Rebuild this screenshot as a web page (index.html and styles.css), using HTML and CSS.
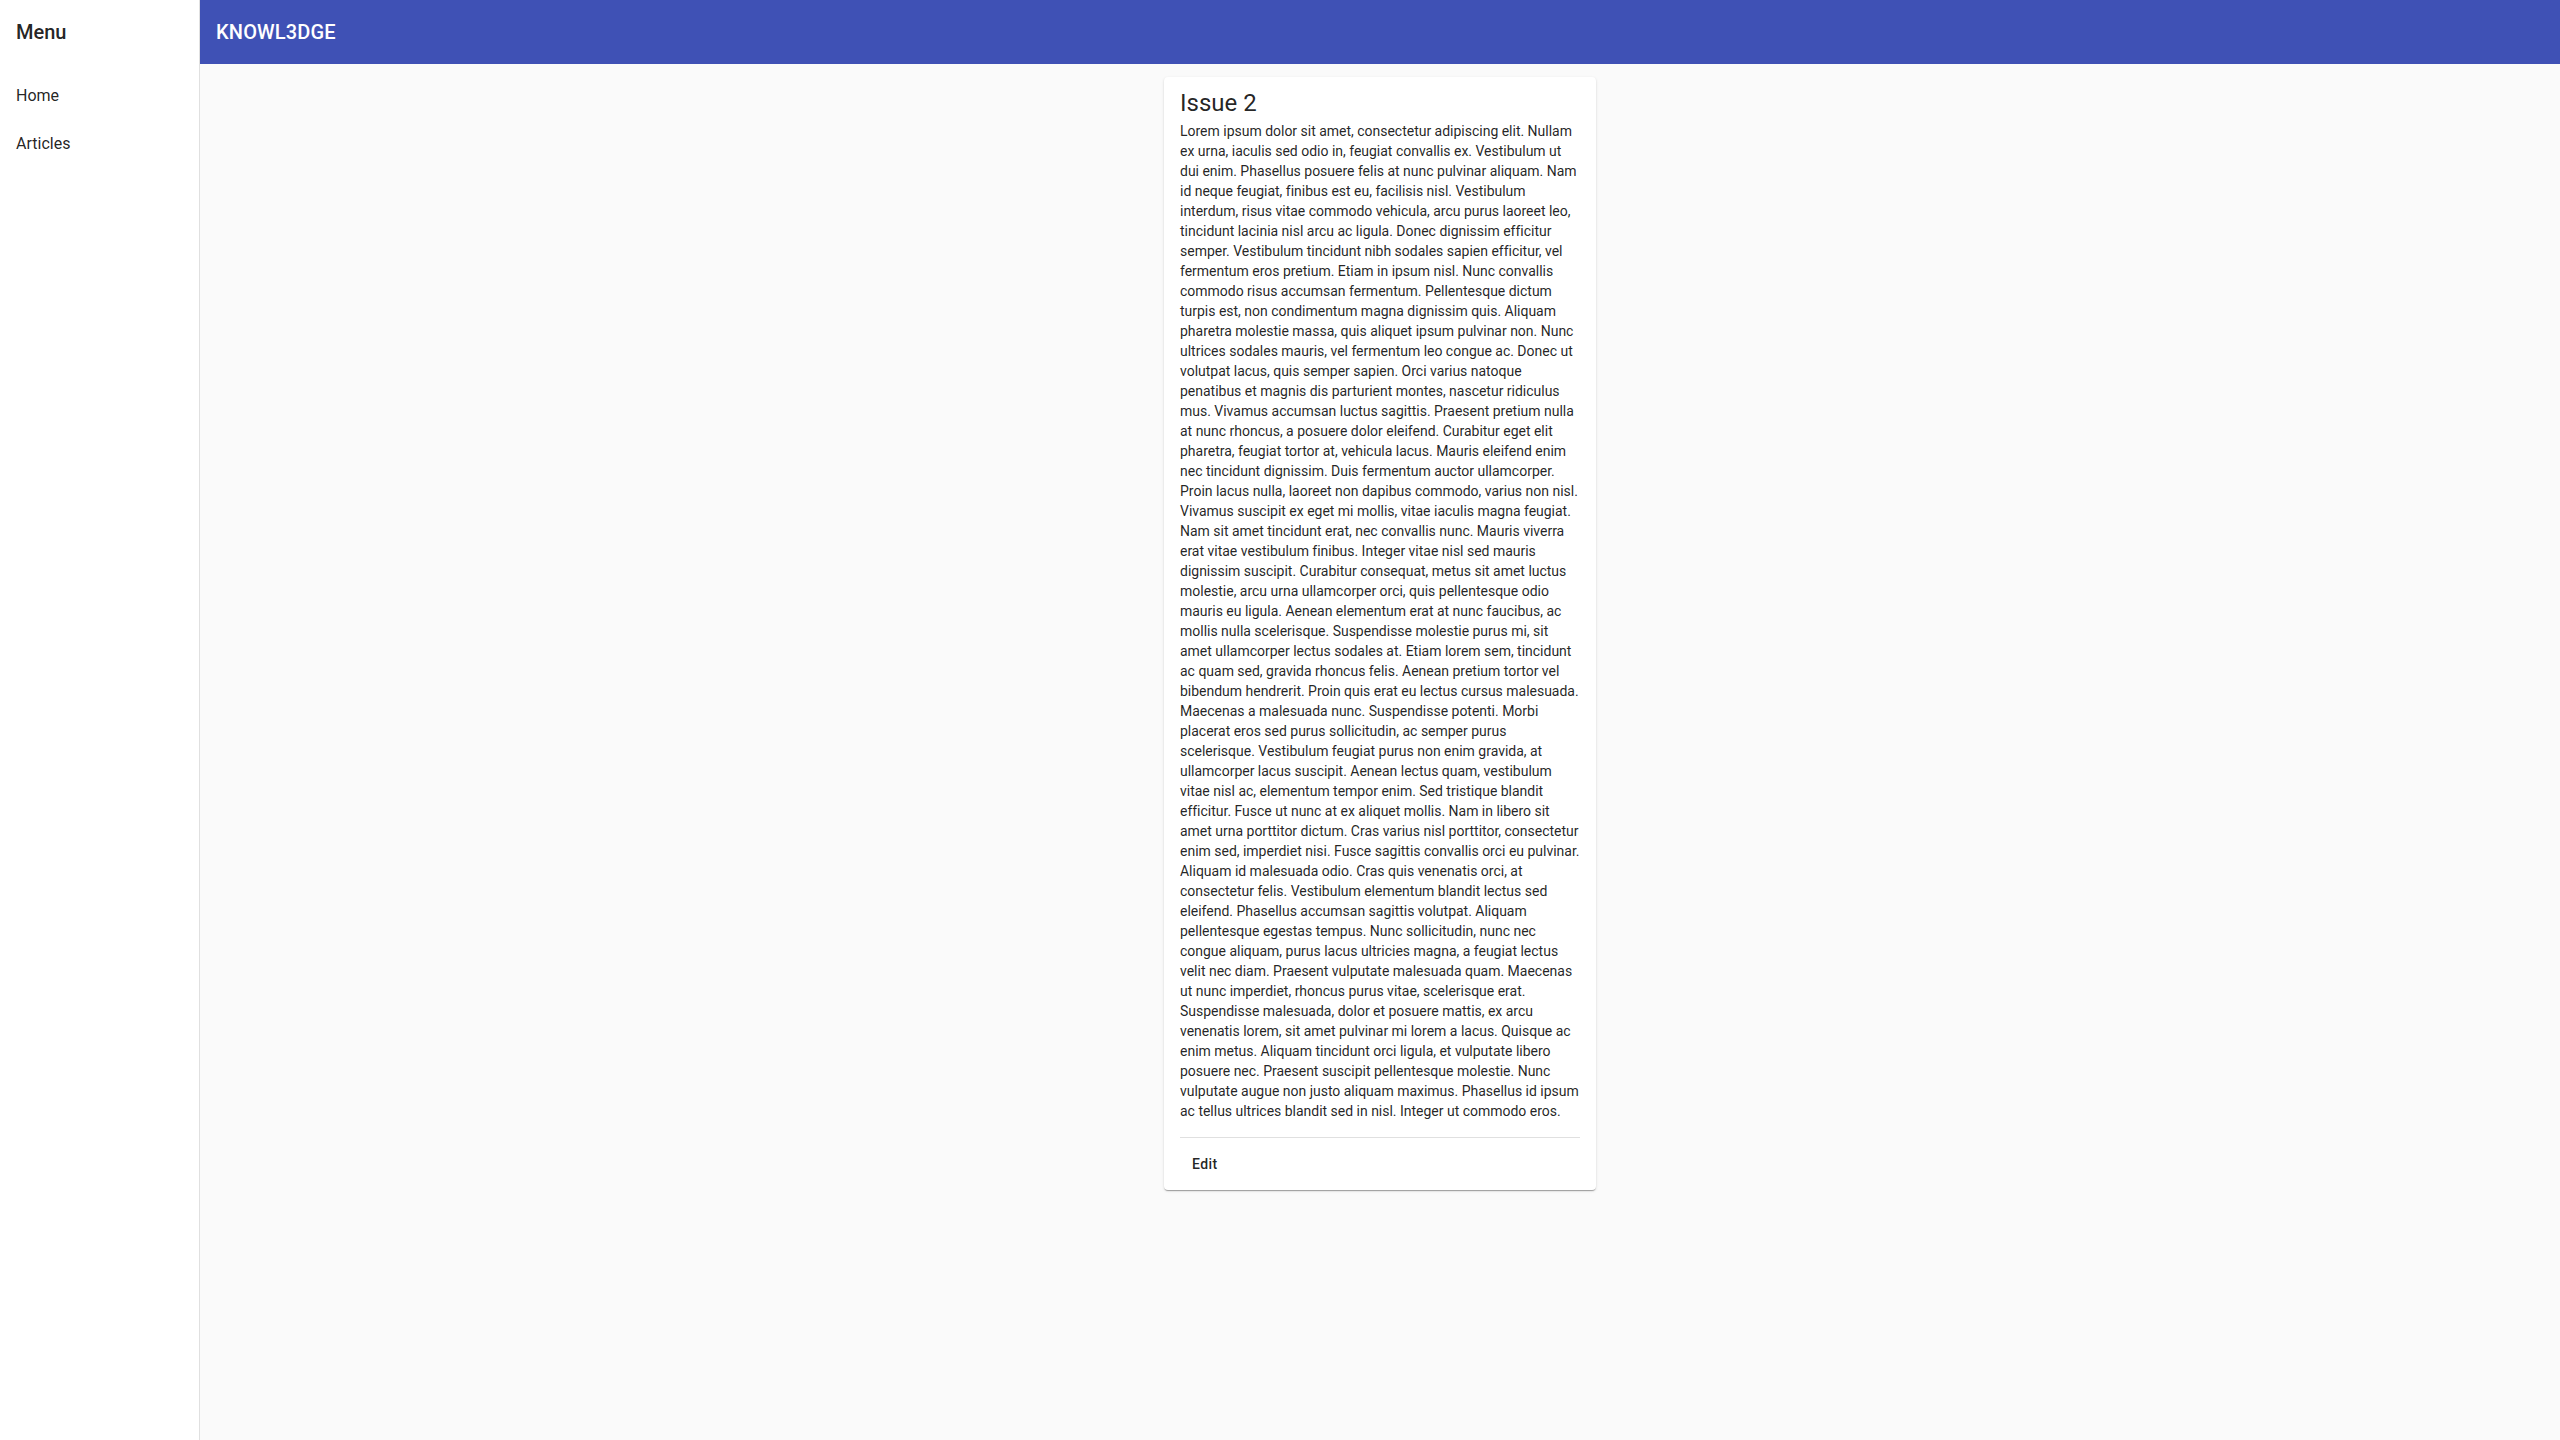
FILE: index.html
```html
<!DOCTYPE html>
<html lang="en">
<head>
<meta charset="utf-8">
<title>KNOWL3DGE</title>
<link rel="stylesheet" href="styles.css">
</head>
<body>
<div class="app">
  <aside class="drawer">
    <div class="drawer-head">Menu</div>
    <ul class="nav">
      <li class="nav-item">Home</li>
      <li class="nav-item">Articles</li>
    </ul>
  </aside>
  <div class="main">
    <header class="appbar">
      <div class="brand">KNOWL3DGE</div>
    </header>
    <main class="content">
      <article class="card">
        <div class="card-body">
          <h2 class="card-title">Issue 2</h2>
          <p class="card-text">Lorem ipsum dolor sit amet, consectetur adipiscing elit. Nullam ex urna, iaculis sed odio in, feugiat convallis ex. Vestibulum ut dui enim. Phasellus posuere felis at nunc pulvinar aliquam. Nam id neque feugiat, finibus est eu, facilisis nisl. Vestibulum interdum, risus vitae commodo vehicula, arcu purus laoreet leo, tincidunt lacinia nisl arcu ac ligula. Donec dignissim efficitur semper. Vestibulum tincidunt nibh sodales sapien efficitur, vel fermentum eros pretium. Etiam in ipsum nisl. Nunc convallis commodo risus accumsan fermentum. Pellentesque dictum turpis est, non condimentum magna dignissim quis. Aliquam pharetra molestie massa, quis aliquet ipsum pulvinar non. Nunc ultrices sodales mauris, vel fermentum leo congue ac. Donec ut volutpat lacus, quis semper sapien. Orci varius natoque penatibus et magnis dis parturient montes, nascetur ridiculus mus. Vivamus accumsan luctus sagittis. Praesent pretium nulla at nunc rhoncus, a posuere dolor eleifend. Curabitur eget elit pharetra, feugiat tortor at, vehicula lacus. Mauris eleifend enim nec tincidunt dignissim. Duis fermentum auctor ullamcorper. Proin lacus nulla, laoreet non dapibus commodo, varius non nisl. Vivamus suscipit ex eget mi mollis, vitae iaculis magna feugiat. Nam sit amet tincidunt erat, nec convallis nunc. Mauris viverra erat vitae vestibulum finibus. Integer vitae nisl sed mauris dignissim suscipit. Curabitur consequat, metus sit amet luctus molestie, arcu urna ullamcorper orci, quis pellentesque odio mauris eu ligula. Aenean elementum erat at nunc faucibus, ac mollis nulla scelerisque. Suspendisse molestie purus mi, sit amet ullamcorper lectus sodales at. Etiam lorem sem, tincidunt ac quam sed, gravida rhoncus felis. Aenean pretium tortor vel bibendum hendrerit. Proin quis erat eu lectus cursus malesuada. Maecenas a malesuada nunc. Suspendisse potenti. Morbi placerat eros sed purus sollicitudin, ac semper purus scelerisque. Vestibulum feugiat purus non enim gravida, at ullamcorper lacus suscipit. Aenean lectus quam, vestibulum vitae nisl ac, elementum tempor enim. Sed tristique blandit efficitur. Fusce ut nunc at ex aliquet mollis. Nam in libero sit amet urna porttitor dictum. Cras varius nisl porttitor, consectetur enim sed, imperdiet nisi. Fusce sagittis convallis orci eu pulvinar. Aliquam id malesuada odio. Cras quis venenatis orci, at consectetur felis. Vestibulum elementum blandit lectus sed eleifend. Phasellus accumsan sagittis volutpat. Aliquam pellentesque egestas tempus. Nunc sollicitudin, nunc nec congue aliquam, purus lacus ultricies magna, a feugiat lectus velit nec diam. Praesent vulputate malesuada quam. Maecenas ut nunc imperdiet, rhoncus purus vitae, scelerisque erat. Suspendisse malesuada, dolor et posuere mattis, ex arcu venenatis lorem, sit amet pulvinar mi lorem a lacus. Quisque ac enim metus. Aliquam tincidunt orci ligula, et vulputate libero posuere nec. Praesent suscipit pellentesque molestie. Nunc vulputate augue non justo aliquam maximus. Phasellus id ipsum ac tellus ultrices blandit sed in nisl. Integer ut commodo eros.</p>
          <hr class="divider">
          <div class="card-actions">
            <button class="btn" type="button">Edit</button>
          </div>
        </div>
      </article>
    </main>
  </div>
</div>
</body>
</html>
```

FILE: styles.css
```css
* { box-sizing: border-box; }

html, body {
  margin: 0;
  padding: 0;
  height: 100%;
}

body {
  font-family: Roboto, "Liberation Sans", sans-serif;
  background: #fafafa;
  color: rgba(0, 0, 0, 0.87);
}

.app {
  display: flex;
  min-height: 100vh;
}

.drawer {
  width: 200px;
  flex: 0 0 200px;
  background: #ffffff;
  border-right: 1px solid rgba(0, 0, 0, 0.12);
  min-height: 100vh;
}

.drawer-head {
  height: 64px;
  display: flex;
  align-items: center;
  padding: 0 16px;
  font-size: 20px;
  font-weight: 500;
  line-height: 32px;
  color: rgba(0, 0, 0, 0.87);
}

.nav {
  list-style: none;
  margin: 0;
  padding: 8px 0;
}

.nav-item {
  height: 48px;
  display: flex;
  align-items: center;
  padding: 0 16px;
  font-size: 16px;
  line-height: 24px;
  color: rgba(0, 0, 0, 0.87);
}

.main {
  flex: 1 1 auto;
  display: flex;
  flex-direction: column;
  min-width: 0;
}

.appbar {
  height: 64px;
  background: #3f51b5;
  color: #ffffff;
  display: flex;
  align-items: center;
  padding: 0 16px;
}

.brand {
  font-size: 20px;
  font-weight: 500;
  line-height: 32px;
  letter-spacing: 0.15px;
}

.content {
  display: flex;
  justify-content: center;
  padding-top: 13px;
}

.card {
  width: 432px;
  background: #ffffff;
  border-radius: 4px;
  box-shadow: 0 2px 1px -1px rgba(0, 0, 0, 0.2), 0 1px 1px 0 rgba(0, 0, 0, 0.14), 0 1px 3px 0 rgba(0, 0, 0, 0.12);
}

.card-body {
  padding: 12px 16px 8px;
}

.card-title {
  margin: 0 0 4px;
  font-size: 24px;
  font-weight: 400;
  line-height: 28px;
  color: rgba(0, 0, 0, 0.87);
}

.card-text {
  margin: 0;
  font-size: 14px;
  line-height: 20px;
  letter-spacing: -0.012px;
  color: rgba(0, 0, 0, 0.87);
}

.divider {
  margin: 16px 0 0;
  border: none;
  height: 1px;
  background: rgba(0, 0, 0, 0.12);
}

.card-actions {
  display: flex;
  padding: 8px 4px 0;
}

.btn {
  height: 36px;
  min-width: 64px;
  padding: 6px 8px;
  border: none;
  background: transparent;
  border-radius: 4px;
  font-family: Roboto, "Liberation Sans", sans-serif;
  font-size: 14px;
  font-weight: 500;
  letter-spacing: 0.02857em;
  color: rgba(0, 0, 0, 0.87);
  text-align: left;
}
```
